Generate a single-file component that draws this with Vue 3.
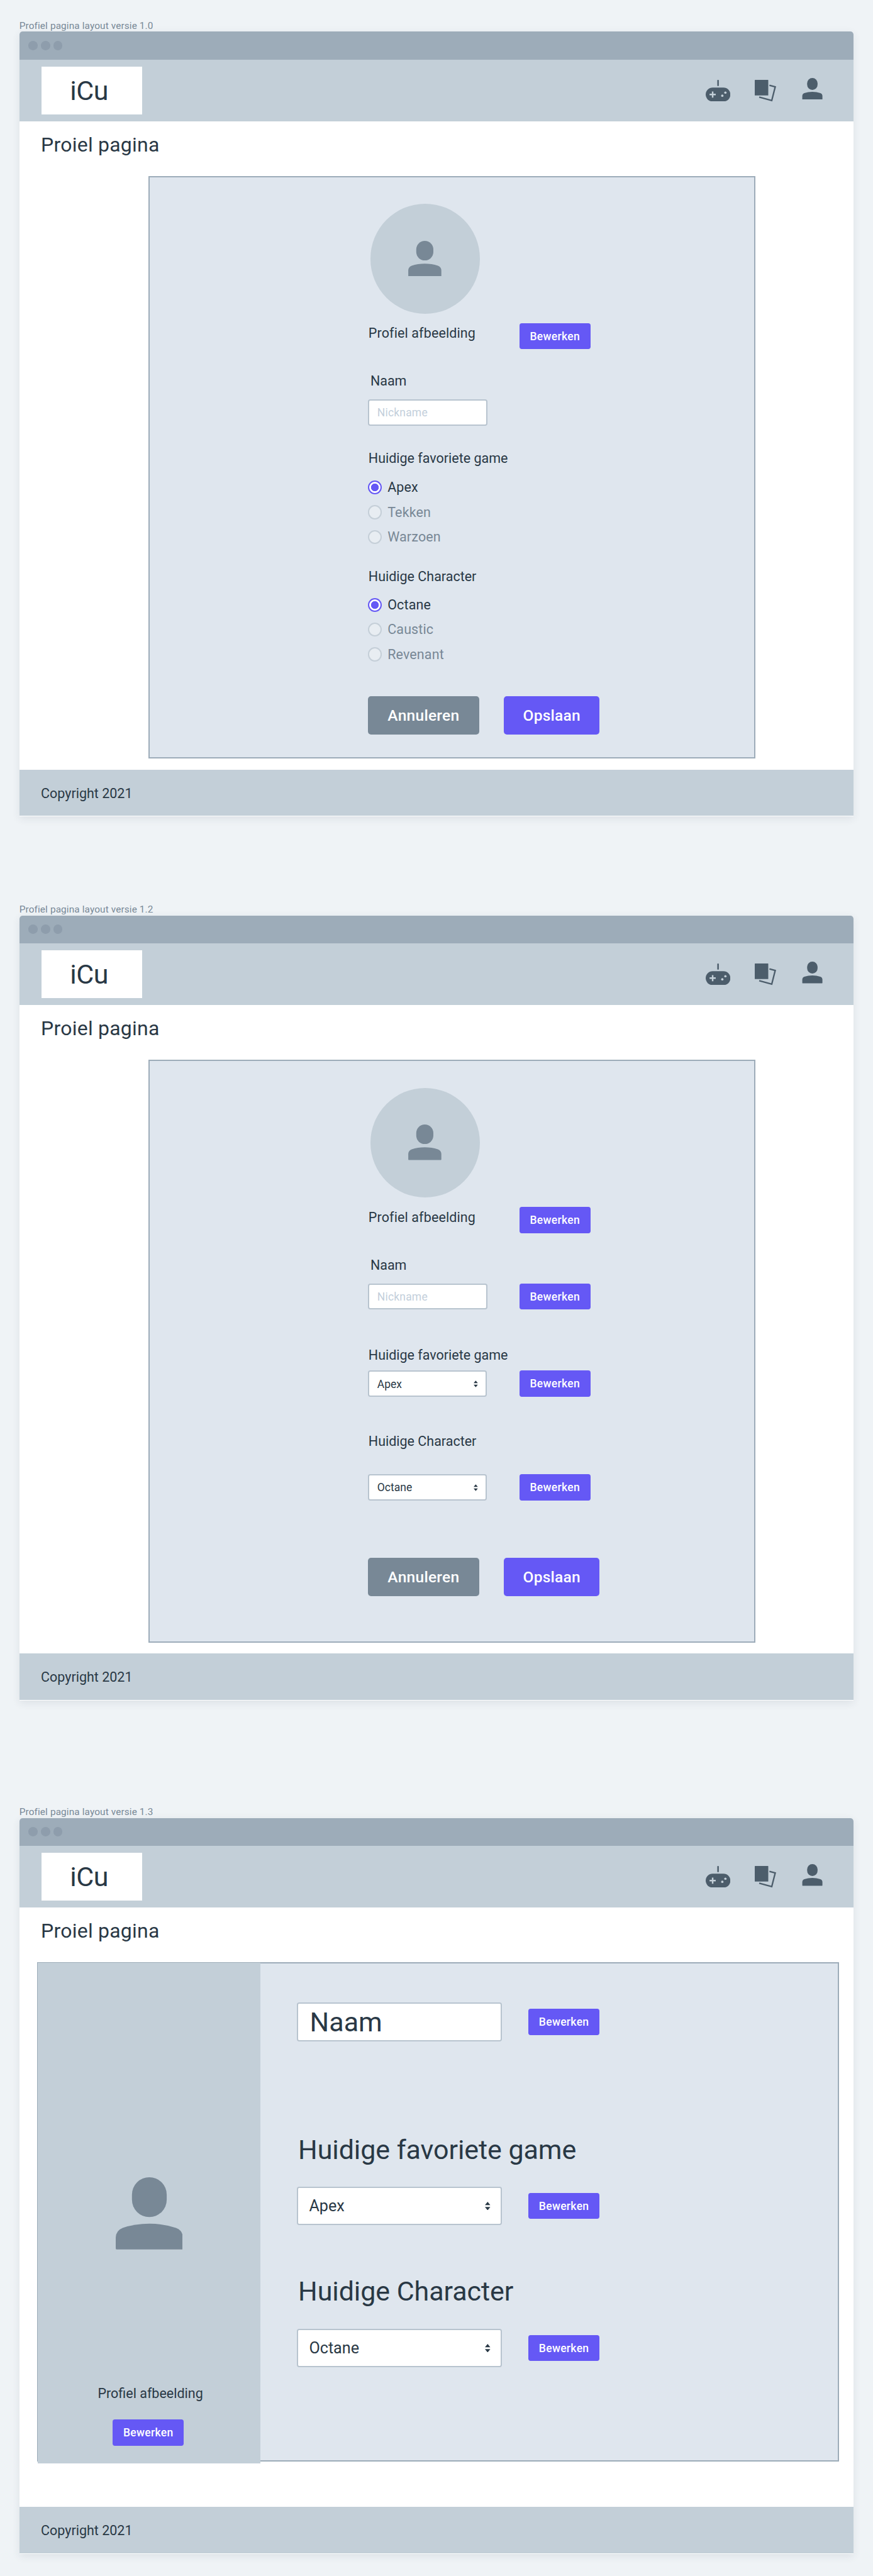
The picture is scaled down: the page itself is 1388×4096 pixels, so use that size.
<script setup>
const frames = [
  { id: 'v10', label: 'Profiel pagina layout versie 1.0', kind: 'radio' },
  { id: 'v12', label: 'Profiel pagina layout versie 1.2', kind: 'select' },
  { id: 'v13', label: 'Profiel pagina layout versie 1.3', kind: 'wide' },
]
const games = ['Apex', 'Tekken', 'Warzoen']
const characters = ['Octane', 'Caustic', 'Revenant']
const personBody =
  'M3 187Q0 187 0 184V157Q0 138 18 131Q50 120 87 120Q124 120 156 131Q174 138 174 157V184Q174 187 171 187Z'
</script>

<template>
  <main class="board">
    <section v-for="f in frames" :key="f.id" class="frame" :class="f.id">
      <div class="frame-label">{{ f.label }}</div>
      <div class="window">
        <div class="titlebar"><i></i><i></i><i></i></div>
        <header class="header">
          <div class="logo">iCu</div>
          <nav class="nav">
            <svg class="icon-pad" viewBox="0 0 64 56">
              <rect x="30" y="0" width="4" height="16" rx="1.5" />
              <rect x="0" y="20" width="64" height="36" rx="18" />
              <path class="cut" d="M16 30h4v6h6v4h-6v6h-4v-6h-6v-4h6z" />
              <circle class="cut" cx="51" cy="33" r="3" />
              <circle class="cut" cx="43" cy="41" r="3" />
            </svg>
            <svg class="icon-cards" viewBox="0 0 56 56">
              <rect x="0" y="0" width="35" height="40.5" rx="1" />
              <path class="line" d="M38 14L53 18L44 53.5L11.5 44.7" />
            </svg>
            <svg class="icon-user" viewBox="0 0 174 187">
              <rect x="42" y="0" width="90" height="103" rx="45" />
              <path :d="personBody" />
            </svg>
          </nav>
        </header>
        <h1 class="title">Proiel pagina</h1>

        <div v-if="f.kind !== 'wide'" class="panel">
          <div class="avatar">
            <svg viewBox="0 0 174 187">
              <rect x="42" y="0" width="90" height="103" rx="45" />
              <path :d="personBody" />
            </svg>
          </div>
          <div class="row picture-row">
            <span class="text">Profiel afbeelding</span>
            <button class="btn">Bewerken</button>
          </div>
          <div class="text name-label">Naam</div>
          <div class="row name-row">
            <div class="field placeholder">Nickname</div>
            <button v-if="f.kind === 'select'" class="btn">Bewerken</button>
          </div>

          <template v-if="f.kind === 'radio'">
            <div class="text game-label">Huidige favoriete game</div>
            <ul class="radios game-list">
              <li v-for="(g, i) in games" :key="g" :class="{ on: i === 0 }"><b></b>{{ g }}</li>
            </ul>
            <div class="text char-label">Huidige Character</div>
            <ul class="radios char-list">
              <li v-for="(c, i) in characters" :key="c" :class="{ on: i === 0 }"><b></b>{{ c }}</li>
            </ul>
          </template>
          <template v-else>
            <div class="text game-label">Huidige favoriete game</div>
            <div class="row game-row">
              <div class="field select">Apex
                <svg viewBox="0 0 14 22"><path d="M7 0L14 8.5H0ZM7 22L14 13.5H0Z" /></svg>
              </div>
              <button class="btn">Bewerken</button>
            </div>
            <div class="text char-label">Huidige Character</div>
            <div class="row char-row">
              <div class="field select">Octane
                <svg viewBox="0 0 14 22"><path d="M7 0L14 8.5H0ZM7 22L14 13.5H0Z" /></svg>
              </div>
              <button class="btn">Bewerken</button>
            </div>
          </template>

          <div class="actions">
            <button class="btn big cancel">Annuleren</button>
            <button class="btn big save">Opslaan</button>
          </div>
        </div>

        <div v-else class="panel wide">
          <aside class="side">
            <svg viewBox="0 0 174 187">
              <rect x="42" y="0" width="90" height="103" rx="45" />
              <path :d="personBody" />
            </svg>
            <span class="text">Profiel afbeelding</span>
            <button class="btn">Bewerken</button>
          </aside>
          <div class="form">
            <div class="row">
              <div class="field large name">Naam</div>
              <button class="btn">Bewerken</button>
            </div>
            <div class="heading game-heading">Huidige favoriete game</div>
            <div class="row">
              <div class="field large select">Apex
                <svg viewBox="0 0 14 22"><path d="M7 0L14 8.5H0ZM7 22L14 13.5H0Z" /></svg>
              </div>
              <button class="btn">Bewerken</button>
            </div>
            <div class="heading char-heading">Huidige Character</div>
            <div class="row">
              <div class="field large select">Octane
                <svg viewBox="0 0 14 22"><path d="M7 0L14 8.5H0ZM7 22L14 13.5H0Z" /></svg>
              </div>
              <button class="btn">Bewerken</button>
            </div>
          </div>
        </div>

        <footer class="footer">Copyright 2021</footer>
      </div>
    </section>
  </main>
</template>

<style>
/* One rem is ten units of the 2260-unit-wide board. */
html {
  font-size: 6.1425px;
}
body {
  margin: 0;
  overflow: hidden;
  background: #eff3f6;
}
</style>

<style scoped>
.board {
  box-sizing: border-box;
  width: 100%;
  height: 4096px;
  overflow: hidden;
  padding: 5rem 5rem 0;
  color: #293845;
  font-family: Roboto, 'Liberation Sans', sans-serif;
}
.board * {
  box-sizing: border-box;
}
.frame {
  height: 228.8rem;
}
.v12 {
  height: 233.6rem;
}
.v13 {
  height: auto;
}
.frame-label {
  height: 3.2rem;
  line-height: 3.5rem;
  font-size: 2.5rem;
  letter-spacing: 0.02rem;
  color: #788896;
  white-space: nowrap;
}
.window {
  display: flex;
  flex-direction: column;
  width: 216rem;
  height: 203.2rem;
  border-radius: 0.8rem 0.8rem 0 0;
  background: #fff;
  box-shadow: 0 0.6rem 2rem rgba(40, 60, 75, 0.09);
}
.v13 .window {
  height: 190.6rem;
}
.titlebar {
  display: flex;
  align-items: center;
  gap: 0.8rem;
  flex: none;
  height: 7.2rem;
  padding-left: 2.4rem;
  border-radius: 0.8rem 0.8rem 0 0;
  background: #9dacb9;
}
.titlebar i {
  width: 2.4rem;
  height: 2.4rem;
  border-radius: 50%;
  background: #8e9dac;
}
.header {
  display: flex;
  align-items: center;
  justify-content: space-between;
  flex: none;
  height: 16rem;
  padding: 0 8.1rem 0 5.8rem;
  background: #c3cfd8;
}
.logo {
  width: 26rem;
  height: 12.4rem;
  padding-right: 1.5rem;
  background: #fff;
  font-size: 7rem;
  line-height: 12.5rem;
  letter-spacing: -0.08rem;
  text-align: center;
}
.nav {
  display: flex;
  align-items: center;
  gap: 6.4rem;
}
.nav svg {
  display: block;
  height: 5.6rem;
  fill: #4c5d6b;
}
.nav .icon-pad {
  width: 6.4rem;
}
.nav .icon-cards {
  width: 5.6rem;
  overflow: visible;
}
.nav .icon-user {
  width: 5.4rem;
  margin: 0 0 0.8rem 0.1rem;
}
.nav .cut {
  fill: #c3cfd8;
}
.nav .line {
  fill: none;
  stroke: #4c5d6b;
  stroke-width: 3.8;
}
.title {
  flex: none;
  height: 14.2rem;
  margin: 0;
  padding: 2.1rem 0 0 5.6rem;
  font-size: 5.2rem;
  line-height: 8.1rem;
  font-weight: 400;
  letter-spacing: 0.04rem;
}
.panel {
  display: flex;
  flex-direction: column;
  flex: none;
  width: 157.2rem;
  height: 150.8rem;
  margin-left: 33.4rem;
  padding: 6.9rem 0 0 56.5rem;
  border: 0.4rem solid #9dacb9;
  background: #dfe6ee;
}
.avatar {
  display: flex;
  align-items: center;
  justify-content: center;
  flex: none;
  width: 28.4rem;
  height: 28.4rem;
  margin-left: 0.6rem;
  padding-right: 0.2rem;
  border-radius: 50%;
  background: #c3cfd8;
}
.avatar svg {
  width: 8.6rem;
  height: 9.2rem;
  margin-bottom: 0.2rem;
  fill: #788896;
}
.text {
  height: 4rem;
  font-size: 3.5rem;
  line-height: 4.3rem;
  padding-left: 0.15rem;
  white-space: nowrap;
}
.row {
  display: flex;
  align-items: center;
}
.panel:not(.wide) .row {
  justify-content: space-between;
  width: 57.6rem;
  height: 6.8rem;
}
.picture-row {
  margin-top: 2.4rem;
}
.picture-row .text {
  margin-bottom: 1.6rem;
  letter-spacing: 0.02rem;
}
.name-label {
  margin-top: 6.2rem;
  padding-left: 0.65rem;
}
.name-row {
  margin-top: 2.8rem;
}
.btn {
  width: 18.4rem;
  height: 6.8rem;
  padding: 0;
  border: 0;
  border-radius: 0.6rem;
  background: #6558f5;
  color: #fff;
  font: 500 2.85rem/6.9rem Roboto, 'Liberation Sans', sans-serif;
  letter-spacing: 0.05rem;
  text-align: center;
}
.field {
  display: flex;
  align-items: center;
  justify-content: space-between;
  width: 31rem;
  height: 6.8rem;
  padding: 0.1rem 2rem 0 2.1rem;
  border: 0.4rem solid #b8c4cf;
  border-radius: 0.6rem;
  background: #fff;
  font-size: 2.85rem;
}
.placeholder {
  color: #c3cfdb;
  letter-spacing: 0.03rem;
}
.select {
  width: 30.8rem;
}
.select svg {
  width: 1.1rem;
  height: 1.8rem;
  fill: #293845;
}
.game-label {
  margin-top: 6.4rem;
}
.radios {
  margin: 0;
  padding: 0;
  list-style: none;
}
.radios li {
  display: flex;
  align-items: center;
  height: 6.4rem;
  gap: 1.5rem;
  color: #788896;
  font-size: 3.5rem;
  line-height: 4.2rem;
  letter-spacing: 0.02rem;
}
.radios b {
  width: 3.6rem;
  height: 3.6rem;
  border: 0.4rem solid #c5cfd8;
  border-radius: 50%;
  background: #e8edf2;
}
.radios .on {
  color: #293845;
}
.radios .on b {
  border-color: #6558f5;
  background: radial-gradient(circle, #6558f5 0 0.95rem, #fff 1.05rem);
}
.game-list {
  margin-top: 2.4rem;
}
.char-label {
  margin-top: 4.9rem;
}
.char-list {
  margin-top: 2.3rem;
}
.actions {
  display: flex;
  gap: 6.4rem;
  margin-top: 7.6rem;
}
.big {
  height: 10rem;
  border-radius: 0.8rem;
  font-size: 4rem;
  line-height: 10.1rem;
  letter-spacing: 0.04rem;
}
.cancel {
  width: 28.8rem;
  background: #788896;
}
.save {
  width: 24.8rem;
}
.v12 .game-label {
  margin-top: 9.7rem;
}
.game-row {
  margin-top: 2.1rem;
}
.v12 .char-label {
  margin-top: 9.5rem;
}
.char-row {
  margin-top: 6.5rem;
}
.v12 .actions {
  margin-top: 14.8rem;
}
.panel.wide {
  flex-direction: row;
  width: 207.6rem;
  height: 129.2rem;
  margin-left: 4.6rem;
  padding: 0;
}
.side {
  display: flex;
  flex-direction: column;
  align-items: center;
  flex: none;
  width: 57.6rem;
  height: 129.6rem;
  margin: -0.15rem 0 0 -0.15rem;
  padding-top: 55.5rem;
  background: #c3cfd8;
}
.side svg {
  flex: none;
  width: 17.4rem;
  height: 18.7rem;
  fill: #788896;
}
.side .text {
  margin-top: 35.1rem;
  padding-left: 0.7rem;
}
.side .btn {
  margin: 4.9rem 0.4rem 0 0;
}
.form {
  padding: 10.1rem 0 0 9.4rem;
}
.form .row {
  gap: 6.8rem;
}
.large {
  width: 53.2rem;
  height: 10rem;
  padding: 0.1rem 2.7rem 0 2.9rem;
  font-size: 4.1rem;
}
.large.name {
  font-size: 7rem;
  padding-left: 3.1rem;
}
.large svg {
  width: 1.4rem;
  height: 2.2rem;
}
.heading {
  height: 8rem;
  padding-left: 0.4rem;
  font-size: 7rem;
  line-height: 8.3rem;
  white-space: nowrap;
  letter-spacing: -0.01rem;
}
.game-heading {
  margin: 23.9rem 0 5.7rem;
}
.char-heading {
  margin: 13rem 0 5.8rem;
}
.footer {
  flex: none;
  height: 12rem;
  margin: auto 0 0.2rem;
  padding-left: 5.6rem;
  background: #c3cfd8;
  font-size: 3.5rem;
  line-height: 12.3rem;
}
</style>
